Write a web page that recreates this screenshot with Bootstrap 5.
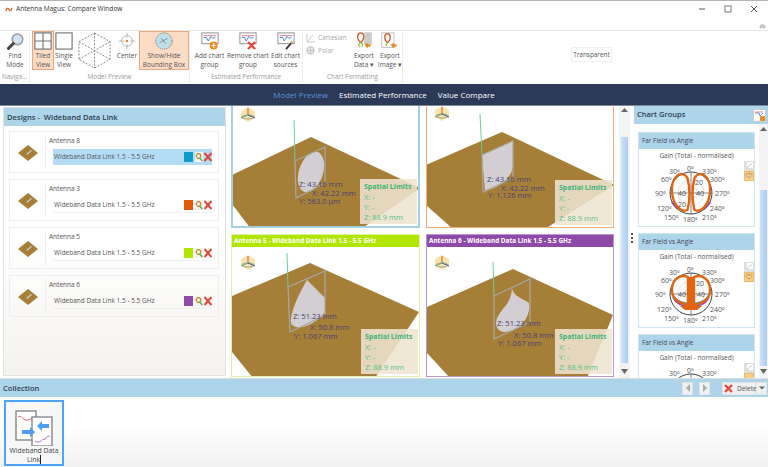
<!DOCTYPE html>
<html lang="en">
<head>
<meta charset="utf-8">
<title>Antenna Magus: Compare Window</title>
<link href="https://cdn.jsdelivr.net/npm/bootstrap@5.3.0/dist/css/bootstrap.min.css" rel="stylesheet">
<style>
html,body{margin:0;width:768px;height:467px;overflow:hidden;background:#fff}
body{font-family:"Open Sans","Noto Sans",sans-serif;font-size:6.5px;color:#444;line-height:1.2}
svg{display:block}
.winbar{height:31px;border-top:1px solid #b4b4b4;border-bottom:1px solid #e6e6e6;padding:0 0 0 5px;position:relative}
.wintitle{font-size:6.6px;color:#333;height:16px;gap:3px}
.winbtns{gap:16px;margin:3px 9px 0 0}
.collapse-mark{position:absolute;right:2px;bottom:1px}
.ribbon{height:53px;color:#555}
.rgroup{border-right:1px solid #eee;margin:0 0 1px 0;padding:0}
.rgroup-items{height:40px}
.rlabel{font-size:6.4px;color:#999;text-align:center;white-space:nowrap;height:10px;line-height:10px;margin-top:1px}
.ritem{height:39px;text-align:center;font-size:6.500px;line-height:9px;color:#555;padding-top:1px;flex:none;white-space:nowrap}
.ritem svg{margin:0 auto 1px;height:18px;width:auto}
.ritem .cubeicon{height:37px;margin:0 auto}
.ron{background:#fddcc4;border:1px solid #e9a681;padding-top:0}
.rsmall{color:#aaa;font-size:6.5px;height:12.500px;gap:3px}
.rsmall svg{flex:none}
.transparent-box{margin:16px 0 0 168px;height:15px;width:41px;border:1px solid #f0f0f0;font-size:6.4px;color:#555;text-align:center;line-height:13px}
.navband{height:22px;background:#2a3a56;border-bottom:1px solid #7c8a9c;font-size:8px;color:#fff;gap:11px;line-height:21px}
.nav-active{color:#5a8fdc}
.mainarea{height:272px;overflow:hidden}
.designs{width:223px;margin:1px 0 2px 3px;border:1px solid #e2e2e2;flex:none;background:linear-gradient(#fff 50%,#f4f2ee)}
.bluehead{background:#aed4ea;height:18px;line-height:18px;font-size:7.600px;font-weight:600;color:#2f3f4f;padding-left:3px}
.dcards{padding:5px 6px 0 5px;gap:6px}
.dcard{height:42px;border:1px solid #eee;padding:3px 0 2px 0}
.dcard-thumb{width:36px;border-right:1px solid #eee;flex:none}
.dname{font-size:6.5px;color:#555;height:14px;padding:0 0 0 3px;line-height:12px}
.drow{margin:0 6px 0 7px;height:16px;padding-left:1px;font-size:6.5px;color:#555;border-bottom:1px solid #eee;white-space:nowrap}
.drow-on{background:#b5dcf6;border-bottom:0}
.swatch{width:9px;height:10px;margin-left:auto;flex:none}
.tiles{display:grid;grid-template-columns:189px 188px;grid-template-rows:122px 143px;column-gap:6px;row-gap:6px;margin-left:5px;flex:none;width:383px}
.tile{position:relative;overflow:hidden;background:#fff;border:1px solid}
.tile-head{height:12px;line-height:12px;font-size:6.4px;font-weight:700;color:#fff;padding-left:2px;white-space:nowrap}
.viewlabels{font-size:7.600px;fill:#4a3f72}
.limits{position:absolute;right:1px;bottom:2px;width:57px;height:45px;background:rgba(238,228,208,.88);color:#55bd8c;font-size:7.500px;line-height:10px;padding:3px 0 0 4px;white-space:nowrap}
.limits b{display:block;color:#3cb37a;font-weight:700;font-size:7px;line-height:10px}
.vscroll{width:11px;background:#f3f3f3;flex:none;margin-left:5px;position:relative}
.vthumb{position:absolute;left:2px;right:2px;background:linear-gradient(90deg,#cfe2f7,#a9cdf2)}
.grip{width:4px;flex:none;position:relative}
.gripdots{position:absolute;top:127px;left:1px;width:2px;height:12px;background:repeating-linear-gradient(#555 0 2px,transparent 2px 4px)}
.charts{width:134px;flex:none;position:relative;overflow:hidden}
.charthead{background:#aed4ea;height:18px;line-height:17px;font-size:7.500px;font-weight:600;color:#2f3f4f;padding-left:3px}
.headicon{position:absolute;right:2px;top:3px}
.cardlist{padding:8px 0 0 4px;gap:6px}
.fcard{width:117px;height:95px;border:1px solid #cfe5f3;flex:none;position:relative}
.fhead{background:#aed4ea;height:16px;line-height:15px;font-size:6.4px;color:#445;padding-left:3px}
.ftitle{font-size:6.5px;text-align:center;color:#555;height:12px;line-height:14px}
.polartext{font-size:7px;fill:#555}
.sidebtn{position:absolute;left:105px;width:10px;height:10px;border:1px solid #ddd;background:#fff}
.sidebtn-on{background:#f9cf8a;border-color:#f2b867}
.cscroll{position:absolute;right:0;top:18px;bottom:0;width:9px;background:#f4f4f4}
.colbar{height:19px;background:#aed4ea;border-top:1px solid #ddd;font-size:7.600px;font-weight:600;color:#2f3f4f;padding-left:3px;line-height:18px}
.colbtn{height:13px;background:#eef0f1;border:1px solid #dfe3e5;flex:none;font-size:6.5px;font-weight:400;color:#555;line-height:11px}
.colbtn svg{flex:none}
.colarea{height:70px;padding:3px 0 0 4px;background:linear-gradient(#fff 40%,#f1f1f1)}
.colthumb{width:60px;height:66px;border:2px solid #4da3f5;background:#f7f7f7;text-align:center;font-size:6.800px;line-height:9px;color:#444}
.cursorbar{border-right:1px solid #222}
</style>
</head>
<body>
<div class="winbar d-flex justify-content-between">
  <div class="wintitle d-flex align-items-center">
    <svg width="8" height="5" viewBox="0 0 9 6"><path d="M1 5C1 1 4 1 4.500 3S8 5 8 1" fill="none" stroke="#d9602a" stroke-width="1.500"/></svg>
    <span>Antenna Magus: Compare Window</span>
  </div>
  <div class="winbtns d-flex align-items-start">
    <svg width="10" height="10" viewBox="0 0 10 10"><path d="M2 5h6" stroke="#555"/></svg>
    <svg width="10" height="10" viewBox="0 0 10 10"><rect x="2" y="2" width="6" height="6" fill="none" stroke="#777"/></svg>
    <svg width="10" height="10" viewBox="0 0 10 10"><path d="M2 2l6 6M8 2l-6 6" stroke="#555"/></svg>
  </div>
  <svg class="collapse-mark" width="7" height="6" viewBox="0 0 7 6"><path d="M1 5h5V3L3.500 1 1 3zM1 3h5" fill="#ddd" stroke="#aaa" stroke-width=".6"/></svg>
</div>

<div class="ribbon d-flex">
  <div class="rgroup" style="width:30px">
    <div class="rgroup-items d-flex">
      <div class="ritem" style="width:30px">
        <svg viewBox="0 0 22 22"><circle cx="14" cy="9" r="6.500" fill="#cfe3f4" stroke="#9a9a9a" stroke-width="1.800"/><path d="M9 14l-6 6" stroke="#444" stroke-width="3.500" stroke-linecap="round"/></svg>
        Find<br>Mode
      </div>
    </div>
    <div class="rlabel">Naviga...</div>
  </div>
  <div class="rgroup" style="width:160px">
    <div class="rgroup-items d-flex">
      <div class="ritem ron" style="width:22px;margin-left:2px">
        <svg viewBox="0 0 20 20"><rect x="1" y="1" width="18" height="18" fill="#fff" stroke="#777" stroke-width="1.300"/><path d="M10 1v18M1 10h18" stroke="#777" stroke-width="1.300"/></svg>
        Tiled<br>View
      </div>
      <div class="ritem" style="width:20px">
        <svg viewBox="0 0 20 20"><rect x="1" y="1" width="18" height="18" fill="#fff" stroke="#777" stroke-width="1.300"/></svg>
        Single<br>View
      </div>
      <div class="ritem" style="width:40px;margin-left:1px">
        <svg class="cubeicon" viewBox="0 0 36 38"><path d="M18 1L34 10V28L18 37L2 28V10ZM18 1V37M2 10L34 28M34 10L2 28" fill="none" stroke="#777" stroke-width=".9" stroke-dasharray="2 1.500"/></svg>
      </div>
      <div class="ritem" style="width:24px">
        <svg viewBox="0 0 22 22"><circle cx="11" cy="11" r="6.500" fill="none" stroke="#aaa"/><path d="M11 1v6M11 15v6M1 11h6M15 11h6" stroke="#aaa"/><circle cx="11" cy="11" r="1.500" fill="#e8842d"/></svg>
        Center
      </div>
      <div class="ritem ron" style="width:50px">
        <svg viewBox="0 0 20 20"><circle cx="10" cy="10" r="9" fill="#bfe0e6" stroke="#777" stroke-dasharray="1.500 1"/><path d="M5 12l9-5M7 7l5 6" stroke="#667" stroke-width=".7"/></svg>
        Show/Hide<br>Bounding Box
      </div>
    </div>
    <div class="rlabel">Model Preview</div>
  </div>
  <div class="rgroup" style="width:113px">
    <div class="rgroup-items d-flex">
      <div class="ritem" style="width:35px;margin-left:2px">
        <svg viewBox="0 0 20 20"><rect x="1" y="1" width="18" height="12" fill="#fff" stroke="#888"/><path d="M3 6h3l2 4 3-5 2 2 3-1" fill="none" stroke="#3f77cf"/><path d="M3 4h14" stroke="#d8566f" stroke-width=".8"/><circle cx="14" cy="15" r="4.500" fill="#e98a23"/><path d="M14 12.500v5M11.500 15h5" stroke="#fff" stroke-width="1.300"/></svg>
        Add chart<br>group
      </div>
      <div class="ritem" style="width:42px">
        <svg viewBox="0 0 20 20"><rect x="1" y="1" width="18" height="12" fill="#fff" stroke="#888"/><path d="M3 6h3l2 4 3-5 2 2 3-1" fill="none" stroke="#3f77cf"/><path d="M3 4h14" stroke="#d8566f" stroke-width=".8"/><path d="M10 11l8 8M18 11l-8 8" stroke="#e5453a" stroke-width="2.400"/></svg>
        Remove chart<br>group
      </div>
      <div class="ritem" style="width:33px">
        <svg viewBox="0 0 20 20"><rect x="1" y="1" width="18" height="12" fill="#fff" stroke="#888"/><path d="M3 6h3l2 4 3-5 2 2 3-1" fill="none" stroke="#3f77cf"/><path d="M3 4h14" stroke="#d8566f" stroke-width=".8"/><path d="M10 19l7-8" stroke="#333" stroke-width="2"/><path d="M15.500 12.500l1.500-1.500" stroke="#f0c040" stroke-width="2"/></svg>
        Edit chart<br>sources
      </div>
    </div>
    <div class="rlabel">Estimated Performance</div>
  </div>
  <div class="rgroup" style="width:100px">
    <div class="rgroup-items d-flex">
      <div class="d-flex flex-column" style="width:45px;margin:1px 0 0 3px;flex:none">
        <div class="rsmall d-flex align-items-center"><svg width="9" height="9" viewBox="0 0 9 9"><path d="M1 0v8h8M2 7c2-1 2-4 5-6" fill="none" stroke="#bbb" stroke-width=".8"/></svg>Cartesian</div>
        <div class="rsmall d-flex align-items-center"><svg width="9" height="9" viewBox="0 0 9 9"><circle cx="4.500" cy="4.500" r="3.800" fill="#e4e4e4" stroke="#bbb" stroke-width=".8"/><path d="M4.500 1v7M1 4.500h7" stroke="#bbb" stroke-width=".6"/></svg>Polar</div>
      </div>
      <div class="ritem" style="width:26px">
        <svg viewBox="0 0 22 22"><rect x="12" y="1" width="8" height="14" fill="#ccc" stroke="#aaa" stroke-width=".5"/><path d="M7 13C1 8 3 1 7 1s6 7 0 12z" fill="none" stroke="#d4562b" stroke-width="1.600"/><path d="M7 13c-3 1-3 4-1 5M7 13c3 1 3 4 1 5" fill="none" stroke="#9cbf45" stroke-width="1.600"/><path d="M12 16l3-3 1 2h3v3h-3l-1 2z" fill="#e98a23"/></svg>
        Export<br>Data ▾
      </div>
      <div class="ritem" style="width:26px">
        <svg viewBox="0 0 22 22"><rect x="1" y="1" width="15" height="18" fill="#fff" stroke="#bbb"/><path d="M8 13C3 9 4 2 8 2s5 7 0 11z" fill="none" stroke="#d4562b" stroke-width="1.600"/><path d="M8 13c-2 1-2 3-1 4" fill="none" stroke="#9cbf45" stroke-width="1.600"/><path d="M12 16l3-3 1 2h3v3h-3l-1 2z" fill="#e98a23"/></svg>
        Export<br>Image ▾
      </div>
    </div>
    <div class="rlabel">Chart Formatting</div>
  </div>
  <div class="transparent-box">Transparent</div>
</div>

<div class="navband d-flex justify-content-center">
  <span class="nav-active">Model Preview</span><span>Estimated Performance</span><span>Value Compare</span>
</div>

<div class="mainarea d-flex">
  <div class="designs">
    <div class="bluehead">Designs -&nbsp; Wideband Data Link</div>
    <div class="dcards d-flex flex-column">
      <div class="dcard d-flex">
        <div class="dcard-thumb d-flex align-items-center justify-content-center"><svg width="22" height="18" viewBox="0 0 22 18"><path d="M11 1L21 9 11 17 1 9z" fill="#a57f37"/><path d="M9 10l5-4 1 1-5 4z" fill="#cfc8bb"/></svg></div>
        <div class="flex-grow-1"><div class="dname">Antenna 8</div>
          <div class="drow drow-on d-flex align-items-center">Wideband Data Link 1.5 - 5.5 GHz<span class="swatch" style="background:#0f9ccb"></span>
          <svg width="19" height="10" viewBox="0 0 19 10"><rect x="2" y="0" width="8" height="10" fill="#f4f4f4"/><circle cx="5.500" cy="4" r="2.300" fill="none" stroke="#c98a1e" stroke-width="1.200"/><path d="M6.500 6l3 3" stroke="#6ab04a" stroke-width="1.500"/><path d="M11.500 1l7 8M18.500 1l-7 8" stroke="#e5453a" stroke-width="2"/></svg></div></div>
      </div>
      <div class="dcard d-flex">
        <div class="dcard-thumb d-flex align-items-center justify-content-center"><svg width="22" height="18" viewBox="0 0 22 18"><path d="M11 1L21 9 11 17 1 9z" fill="#a57f37"/><path d="M9 10l5-4 1 1-5 4z" fill="#cfc8bb"/></svg></div>
        <div class="flex-grow-1"><div class="dname">Antenna 3</div>
          <div class="drow d-flex align-items-center">Wideband Data Link 1.5 - 5.5 GHz<span class="swatch" style="background:#e25a0c"></span>
          <svg width="19" height="10" viewBox="0 0 19 10"><rect x="2" y="0" width="8" height="10" fill="#f4f4f4"/><circle cx="5.500" cy="4" r="2.300" fill="none" stroke="#c98a1e" stroke-width="1.200"/><path d="M6.500 6l3 3" stroke="#6ab04a" stroke-width="1.500"/><path d="M11.500 1l7 8M18.500 1l-7 8" stroke="#e5453a" stroke-width="2"/></svg></div></div>
      </div>
      <div class="dcard d-flex">
        <div class="dcard-thumb d-flex align-items-center justify-content-center"><svg width="22" height="18" viewBox="0 0 22 18"><path d="M11 1L21 9 11 17 1 9z" fill="#a57f37"/><path d="M9 10l5-4 1 1-5 4z" fill="#cfc8bb"/></svg></div>
        <div class="flex-grow-1"><div class="dname">Antenna 5</div>
          <div class="drow d-flex align-items-center">Wideband Data Link 1.5 - 5.5 GHz<span class="swatch" style="background:#b0e600"></span>
          <svg width="19" height="10" viewBox="0 0 19 10"><rect x="2" y="0" width="8" height="10" fill="#f4f4f4"/><circle cx="5.500" cy="4" r="2.300" fill="none" stroke="#c98a1e" stroke-width="1.200"/><path d="M6.500 6l3 3" stroke="#6ab04a" stroke-width="1.500"/><path d="M11.500 1l7 8M18.500 1l-7 8" stroke="#e5453a" stroke-width="2"/></svg></div></div>
      </div>
      <div class="dcard d-flex">
        <div class="dcard-thumb d-flex align-items-center justify-content-center"><svg width="22" height="18" viewBox="0 0 22 18"><path d="M11 1L21 9 11 17 1 9z" fill="#a57f37"/><path d="M9 10l5-4 1 1-5 4z" fill="#cfc8bb"/></svg></div>
        <div class="flex-grow-1"><div class="dname">Antenna 6</div>
          <div class="drow d-flex align-items-center">Wideband Data Link 1.5 - 5.5 GHz<span class="swatch" style="background:#8e4aa8"></span>
          <svg width="19" height="10" viewBox="0 0 19 10"><rect x="2" y="0" width="8" height="10" fill="#f4f4f4"/><circle cx="5.500" cy="4" r="2.300" fill="none" stroke="#c98a1e" stroke-width="1.200"/><path d="M6.500 6l3 3" stroke="#6ab04a" stroke-width="1.500"/><path d="M11.500 1l7 8M18.500 1l-7 8" stroke="#e5453a" stroke-width="2"/></svg></div></div>
      </div>
    </div>
  </div>

  <div class="tiles">
    <div class="tile" style="border-color:#a6cfe2;border-width:0 2px 2px 2px">
      <svg width="185" height="120" viewBox="233 106 185 120">
        <defs>
          <g id="triad"><path d="M7 0l7 4v7l-7 4-7-4V4z" fill="#f5e4ab"/><path d="M7 8V1" stroke="#d9502a"/><path d="M7 8L0 11" stroke="#58b86e"/><path d="M7 8l7 3" stroke="#3d4f9f"/><ellipse cx="7" cy="10" rx="6" ry="2" fill="none" stroke="#777" stroke-width=".6"/></g>
        </defs>
        <path d="M232 175L311 137 420 188 361 229H251L232 204z" fill="#a57f37"/>
        <use href="#triad" x="241" y="107"/>
        <path d="M294 120L295 161" stroke="#6fcf97"/>
        <ellipse cx="311" cy="172" rx="12" ry="21" transform="rotate(18 311 172)" fill="#d2ced2"/>
        <path d="M295 161L325 147V183L296 198z" fill="none" stroke="#a9a9a9" stroke-width="1.200"/>
        <g class="viewlabels"><text x="299" y="187">Z: 43.16 mm</text><text x="312" y="196">X: 42.22 mm</text><text x="299" y="204">Y: 563.0 µm</text></g>
      </svg>
      <div class="limits"><b>Spatial Limits</b>X: -<br>Y: -<br>Z: 88.9 mm</div>
    </div>
    <div class="tile" style="border-color:#f3ae7e;border-top:0">
      <svg width="186" height="121" viewBox="427 106 186 121">
        <path d="M426 165L502 132 614 185 545 229H453L426 205z" fill="#a57f37"/>
        <use href="#triad" x="435" y="106"/>
        <path d="M480 114L482 155" stroke="#6fcf97"/>
        <path d="M482 155L513 141V165C512 180 497 188 485 191z" fill="#d2ced2"/>
        <path d="M482 155L513 141V178L483 192z" fill="none" stroke="#a9a9a9" stroke-width="1.200"/>
        <g class="viewlabels"><text x="487" y="182">Z: 43.16 mm</text><text x="501" y="191">X: 42.22 mm</text><text x="488" y="198">Y: 1.126 mm</text></g>
      </svg>
      <div class="limits"><b>Spatial Limits</b>X: -<br>Y: -<br>Z: 88.9 mm</div>
    </div>
    <div class="tile" style="border-color:#dff2a6">
      <div class="tile-head" style="background:#b0e600">Antenna 5 - Wideband Data Link 1.5 - 5.5 GHz</div>
      <svg width="187" height="129" viewBox="232 247 187 129">
        <path d="M232 296L310 263 419 312 375 378H253L232 352z" fill="#a57f37"/>
        <use href="#triad" x="241" y="255"/>
        <path d="M287 253L288 287" stroke="#6fcf97"/>
        <path d="M307 280L325 298V312C318 322 300 332 292 325 288 320 295 300 307 280z" fill="#d2ced2"/>
        <path d="M288 287L325 271V315L290 332z" fill="none" stroke="#a9a9a9" stroke-width="1.200"/>
        <g class="viewlabels"><text x="293" y="319">Z: 51.23 mm</text><text x="310" y="330">X: 50.8 mm</text><text x="294" y="339">Y: 1.067 mm</text></g>
      </svg>
      <div class="limits"><b>Spatial Limits</b>X: -<br>Y: -<br>Z: 88.9 mm</div>
    </div>
    <div class="tile" style="border-color:#b996cc">
      <div class="tile-head" style="background:#8e4aa8">Antenna 6 - Wideband Data Link 1.5 - 5.5 GHz</div>
      <svg width="186" height="129" viewBox="427 247 186 129">
        <path d="M427 307L513 269 613 315 587 378H450L427 353z" fill="#a57f37"/>
        <use href="#triad" x="435" y="255"/>
        <path d="M493 262L494 296" stroke="#6fcf97"/>
        <path d="M512 288C513 296 522 298 529 303 531 315 522 328 510 331 498 335 494 326 497 318 503 306 511 304 512 288z" fill="#d2ced2"/>
        <path d="M494 296L530 279V322L494 339z" fill="none" stroke="#a9a9a9" stroke-width="1.200"/>
        <g class="viewlabels"><text x="497" y="326">Z: 51.23 mm</text><text x="514" y="338">X: 50.8 mm</text><text x="498" y="346">Y: 1.067 mm</text></g>
      </svg>
      <div class="limits"><b>Spatial Limits</b>X: -<br>Y: -<br>Z: 88.9 mm</div>
    </div>
  </div>

  <div class="vscroll">
    <svg width="11" height="8" viewBox="0 0 11 8"><path d="M5.500 2L9 6H2z" fill="#666"/></svg>
    <div class="vthumb" style="top:31px;height:226px"></div>
    <svg class="position-absolute" style="bottom:4px" width="11" height="6" viewBox="0 0 11 6"><path d="M5.500 6L9 1H2z" fill="#666"/></svg>
  </div>
  <div class="grip"><div class="gripdots"></div></div>

  <div class="charts">
    <div class="charthead">Chart Groups
      <svg class="headicon" width="13" height="13" viewBox="0 0 13 13"><rect x=".5" y=".5" width="12" height="12" fill="#fff" stroke="#ccc"/><path d="M2 4h4l1 3 3-3" fill="none" stroke="#3f77cf" stroke-width=".8"/><path d="M2 3h8" stroke="#d8566f" stroke-width=".7"/><rect x="7" y="7" width="5" height="5" rx="1" fill="#e98a23"/></svg>
    </div>
    <div class="cardlist d-flex flex-column">
      <div class="fcard">
        <div class="fhead">Far Field vs Angle</div>
        <div class="ftitle">Gain (Total - normalised)</div>
        <svg width="104" height="64" viewBox="639 161 104 64">
          <defs><g id="polargrid"><circle cx="691" cy="193" r="21" fill="#fff" stroke="#444"/><circle cx="691" cy="193" r="13" fill="none" stroke="#ccc" stroke-width=".6"/><circle cx="691" cy="193" r="6" fill="none" stroke="#ccc" stroke-width=".6"/><path d="M670 193h42M691 172v42" stroke="#555" stroke-width=".7"/></g>
          <g id="polarlabels" class="polartext"><text x="687" y="171">0º</text><text x="669" y="174">30º</text><text x="702" y="174">330º</text><text x="661" y="182">60º</text><text x="710" y="182">300º</text><text x="655" y="196">90º</text><text x="715" y="196">270º</text><text x="657" y="211">120º</text><text x="710" y="211">240º</text><text x="664" y="220">150º</text><text x="702" y="220">210º</text><text x="683" y="222">180º</text></g></defs>
          <use href="#polargrid"/><use href="#polarlabels"/>
          <path d="M672 202L678 209" stroke="#8e4aa8" stroke-width="2.500"/><path d="M710 202L704 209" stroke="#8e4aa8" stroke-width="2.500"/>
          <path d="M687.500 178C682 169 671 176 672 192 673 205 681 213 687.500 210 690 200 690 188 687.500 178zM694.500 178C700 169 711 176 710 192 709 205 701 213 694.500 210 692 200 692 188 694.500 178z" fill="none" stroke="#e2640f" stroke-width="2.400"/>
          <g class="polartext"><text x="695" y="185">20</text><text x="678" y="196">40</text><text x="696" y="196">40</text><text x="678" y="207">20</text></g>
        </svg>
        <div class="sidebtn" style="top:28px"><svg width="8" height="8" viewBox="0 0 8 8"><path d="M1 0v7h7M2 6c2-1 2-4 5-4" fill="none" stroke="#aaa" stroke-width=".7"/></svg></div>
        <div class="sidebtn sidebtn-on" style="top:38px"><svg width="8" height="8" viewBox="0 0 8 8"><path d="M4 6C0 4 1 1 2.500 1S4 3 4 3s0-2 1.500-2S8 4 4 6z" fill="none" stroke="#a58a5a" stroke-width=".7"/></svg></div>
      </div>
      <div class="fcard">
        <div class="fhead">Far Field vs Angle</div>
        <div class="ftitle">Gain (Total - normalised)</div>
        <svg width="104" height="64" viewBox="639 161 104 64">
          <use href="#polargrid"/><use href="#polarlabels"/>
          <path d="M673 196C680 205 702 205 709 196" fill="none" stroke="#2f9fcf" stroke-width="2.500"/>
          <path d="M674 198C680 208 702 208 708 198" fill="none" stroke="#8e4aa8" stroke-width="1.500"/>
          <path d="M688 176C680 173 672 178 672 189 672 198 678 202 688 204zM694 176C702 173 710 178 710 189 710 198 704 202 694 204z" fill="none" stroke="#e2640f" stroke-width="2.400"/>
          <path d="M680 205h22l-5 4h-12zM687 176h8v33h-8z" fill="#e2640f"/>
          <g class="polartext"><text x="696" y="185">20</text><text x="678" y="196">40</text><text x="697" y="196">40</text></g>
        </svg>
        <div class="sidebtn" style="top:28px"><svg width="8" height="8" viewBox="0 0 8 8"><path d="M1 0v7h7M2 6c2-1 2-4 5-4" fill="none" stroke="#aaa" stroke-width=".7"/></svg></div>
        <div class="sidebtn sidebtn-on" style="top:38px"><svg width="8" height="8" viewBox="0 0 8 8"><path d="M4 6C0 4 1 1 2.500 1S4 3 4 3s0-2 1.500-2S8 4 4 6z" fill="none" stroke="#a58a5a" stroke-width=".7"/></svg></div>
      </div>
      <div class="fcard">
        <div class="fhead">Far Field vs Angle</div>
        <div class="ftitle">Gain (Total - normalised)</div>
        <svg width="104" height="64" viewBox="639 161 104 64">
          <use href="#polargrid"/><use href="#polarlabels"/>
        </svg>
        <div class="sidebtn" style="top:28px"><svg width="8" height="8" viewBox="0 0 8 8"><path d="M1 0v7h7M2 6c2-1 2-4 5-4" fill="none" stroke="#aaa" stroke-width=".7"/></svg></div>
        <div class="sidebtn sidebtn-on" style="top:38px"></div>
      </div>
    </div>
    <div class="cscroll">
      <svg width="9" height="10" viewBox="0 0 9 10"><path d="M4.500 3L8 7H1z" fill="#666"/></svg>
      <div class="vthumb" style="top:66px;height:176px;left:1px;right:1px"></div>
      <svg class="position-absolute" style="bottom:4px" width="9" height="6" viewBox="0 0 9 6"><path d="M4.500 6L8 1H1z" fill="#666"/></svg>
    </div>
  </div>
</div>

<div class="colbar d-flex align-items-center">
  <span>Collection</span>
  <div class="d-flex align-items-center ms-auto">
    <div class="colbtn d-flex align-items-center justify-content-center" style="width:11px"><svg width="6" height="8" viewBox="0 0 6 8"><path d="M5 0v8L1 4z" fill="#aaa"/></svg></div>
    <div class="colbtn d-flex align-items-center justify-content-center" style="width:11px;margin-left:6px"><svg width="6" height="8" viewBox="0 0 6 8"><path d="M1 0v8l4-4z" fill="#aaa"/></svg></div>
    <div class="colbtn d-flex align-items-center gap-1" style="width:34px;margin-left:12px;padding-left:1px"><svg width="9" height="9" viewBox="0 0 9 9"><path d="M1 1l7 7M8 1L1 8" stroke="#e5453a" stroke-width="2.200"/></svg>Delete</div>
    <div class="colbtn d-flex align-items-center justify-content-center" style="width:11px;margin:0 1px 0 0"><svg width="6" height="4" viewBox="0 0 6 4"><path d="M0 .5h6L3 3.500z" fill="#666"/></svg></div>
  </div>
</div>
<div class="colarea">
  <div class="colthumb">
    <svg width="56" height="44" viewBox="6 402 56 44">
      <rect x="16" y="411" width="20" height="29" fill="#fff" stroke="#888" stroke-width="1.400"/>
      <path d="M18 417c3-2 4 1 7 3 3 1 5-2 8-1" fill="none" stroke="#e0566f" stroke-width=".9"/>
      <rect x="32" y="417" width="20" height="29" fill="#fff" stroke="#888" stroke-width="1.400"/>
      <path d="M22 430h8v-3l5 5-5 5v-3h-8z" fill="#4d9df5"/>
      <path d="M49 424h-7v-3l-5 5 5 5v-3h7z" fill="#4d9df5"/>
      <path d="M35 441c3 2 5 1 7-1s3 1 4-2c1-2 3-3 4-1" fill="none" stroke="#9b5bc0" stroke-width=".9"/>
    </svg>
    Wideband Data<br><span class="cursorbar">Link</span>
  </div>
</div>
<script src="https://cdn.jsdelivr.net/npm/bootstrap@5.3.0/dist/js/bootstrap.bundle.min.js"></script>
</body>
</html>
